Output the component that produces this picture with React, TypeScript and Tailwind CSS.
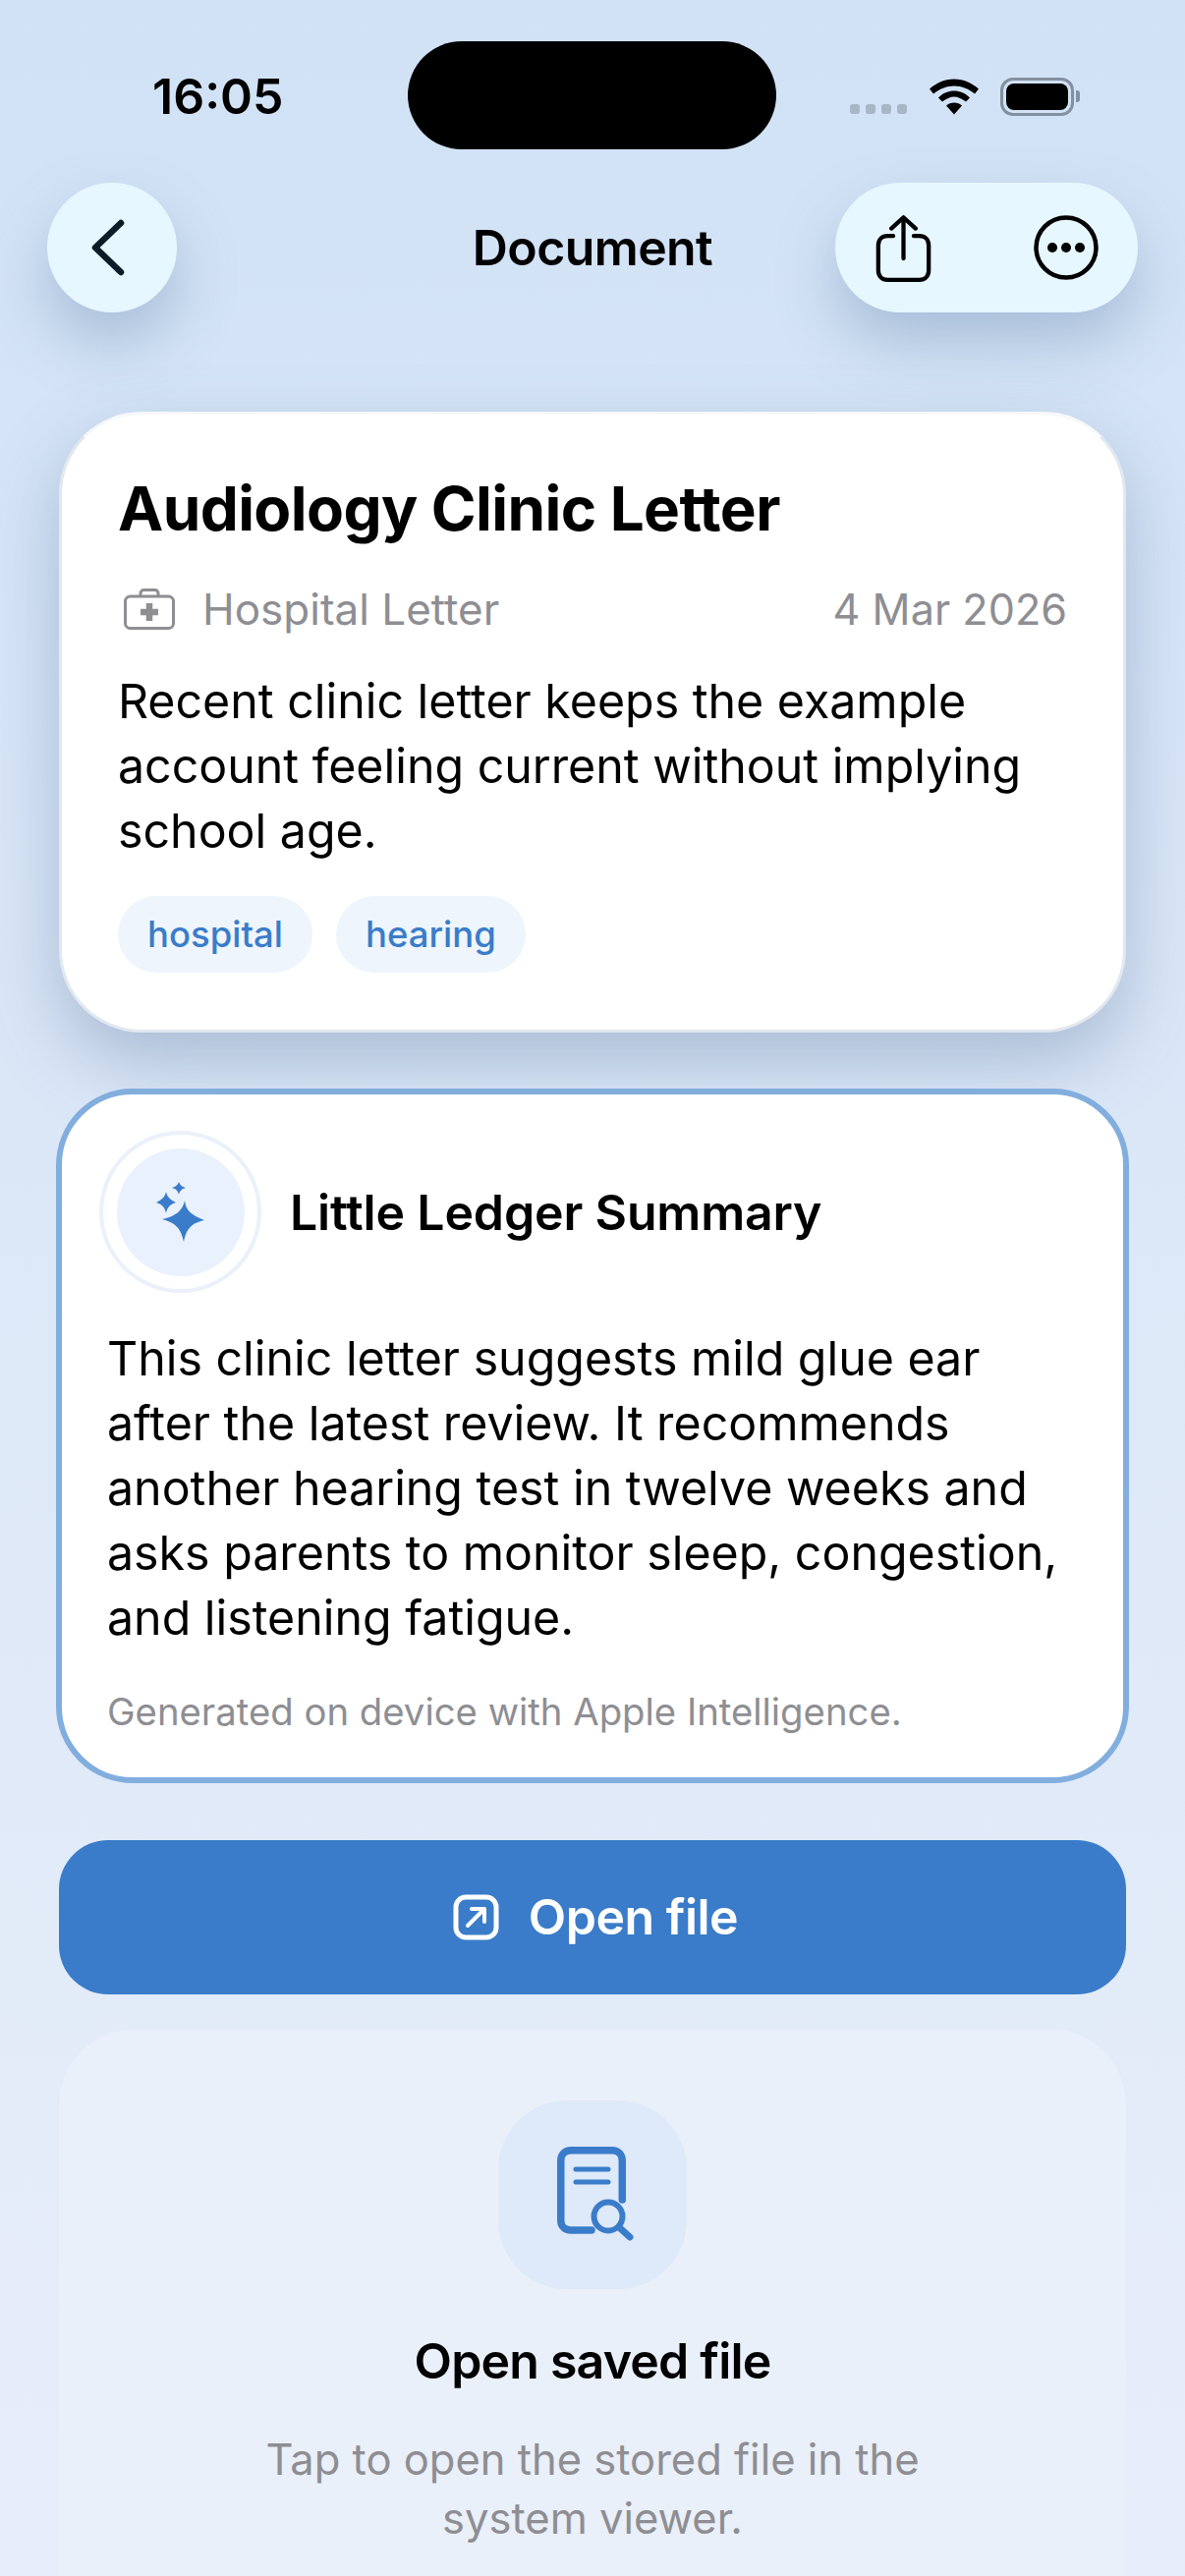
import React from 'react';

const ShareIcon = () => (
  <svg width="57" height="71" viewBox="0 0 60 74" fill="none" stroke="#000" strokeWidth="4.5" strokeLinecap="round" strokeLinejoin="round" className="mt-[3px]">
    <path d="M19 23H13C7 23 3 27 3 33V60C3 66 7 70 13 70H47C53 70 57 66 57 60V33C57 27 53 23 47 23H41" />
    <path d="M30 47V4M17 15L30 3L43 15" />
  </svg>
);

const MoreIcon = () => (
  <svg width="66" height="66" viewBox="0 0 66 66" fill="none">
    <circle cx="33" cy="33" r="30.5" stroke="#000" strokeWidth="4.5" />
    <circle cx="19" cy="33" r="5" fill="#000" />
    <circle cx="33" cy="33" r="5" fill="#000" />
    <circle cx="47" cy="33" r="5" fill="#000" />
  </svg>
);

const MedicalBag = () => (
  <svg width="52" height="42" viewBox="0 0 52 42" fill="none">
    <rect x="1.5" y="8" width="49" height="32.5" rx="5" stroke="#8e8e93" strokeWidth="3" />
    <path d="M17 8V5C17 3 18.5 1.5 20.5 1.5H31.5C33.5 1.5 35 3 35 5V8" stroke="#8e8e93" strokeWidth="3" />
    <path d="M26 15V33M17 24H35" stroke="#8e8e93" strokeWidth="6.5" />
  </svg>
);

const Sparkles = () => (
  <svg width="50" height="62" viewBox="0 0 50 62" fill="#3a7cc9">
    <path d="M29 19C30 29 36 34 49 39C36 42 31 47 28 61C25 47 20 42 6 38C20 35 27 29 29 19Z" />
    <path d="M10 10C11 15 14 18 20 21C14 23 11 26 10 32C9 26 6 23 0 21C6 18 9 15 10 10Z" />
    <path d="M23 0C24 3 26 5 30 6C26 7 24 9 23 13C22 9 20 7 16 6C20 5 22 3 23 0Z" />
  </svg>
);

const OpenIcon = () => (
  <svg width="47" height="47" viewBox="0 0 47 47" fill="none" stroke="#fff" strokeLinecap="round" strokeLinejoin="round">
    <rect x="3" y="3" width="41" height="41" rx="10" strokeWidth="5" />
    <path d="M15 32L31 16M19 15H32V28" strokeWidth="4" />
  </svg>
);

const DocSearch = () => (
  <svg width="78" height="96" viewBox="0 0 78 96" fill="none" stroke="#3a7cc9" strokeLinecap="round" className="ml-[6px] mb-[2px]">
    <path d="M35 85H14C8 85 3.75 81 3.75 75V14C3.75 8 8 3.75 14 3.75H56C62 3.75 66.25 8 66.25 14V54" strokeWidth="7.5" />
    <path d="M19 23H52M19 36H52" strokeWidth="5" />
    <circle cx="52" cy="71" r="14.5" strokeWidth="6" />
    <path d="M63 82L74 92" strokeWidth="7" />
  </svg>
);

const StatusBar = () => (
  <div className="flex items-start justify-between h-[186px] pt-[42px]">
    <div className="w-[415px] pl-[155px] pt-[28px] text-[50px] leading-[56px] font-semibold text-black">16:05</div>
    <div className="w-[375px] h-[110px] rounded-[55px] bg-black" />
    <div className="flex-1 flex items-center pl-[75px] pt-[28px] h-[84px]">
      <div className="flex gap-[6px] mt-[26px] mr-[23px]">
        {[0, 1, 2, 3].map((i) => (
          <span key={i} className="w-[10px] h-[10px] rounded-[3px] bg-[#a9b6c6]" />
        ))}
      </div>
      <svg width="50" height="37" viewBox="0 0 50 36" fill="#000" className="mr-[22px]">
        <path d="M25 0C35 0 43 4 50 10L46 15C40 10 33 7 25 7C17 7 10 10 4 15L0 10C7 4 15 0 25 0Z" />
        <path d="M25 12C31 12 36 14 41 19L37 23C33 20 29 18 25 18C21 18 17 20 13 23L9 19C14 14 19 12 25 12Z" />
        <path d="M25 24C28 24 31 25 33 27L25 36L17 27C19 25 22 24 25 24Z" />
      </svg>
      <div className="w-[75px] h-[39px] rounded-[13px] border-[3px] border-[#83909f] p-[3px]">
        <div className="w-full h-full rounded-[8px] bg-black" />
      </div>
      <div className="w-[4px] h-[12px] rounded-r-[3px] bg-[#83909f] ml-[2px]" />
    </div>
  </div>
);

const Pill = ({ children }: { children: React.ReactNode }) => (
  <div className="h-[78px] px-[30px] rounded-full bg-[#eef5fd] flex items-center text-[36.5px] font-medium text-[#3a7cc9]">{children}</div>
);

export default function App() {
  return (
    <div className="w-[1206px] h-[2622px] overflow-hidden bg-gradient-to-b from-[#d1e2f6] to-[#e8eef9] font-['Inter',sans-serif] text-black">
      <StatusBar />

      <div className="flex items-center justify-between h-[132px] pl-[48px] pr-[48px]">
        <button className="w-[132px] h-[132px] rounded-full bg-[#e6f7ff] shadow-[0_30px_60px_rgba(90,120,160,0.35)] flex items-center justify-center">
          <svg width="34" height="58" viewBox="0 0 34 58" fill="none" stroke="#0c1c26" strokeWidth="6.5" strokeLinecap="round" strokeLinejoin="round" className="mr-[8px]">
            <path d="M30 4L4 29L30 54" />
          </svg>
        </button>
        <div className="flex-1 pl-[176px] text-center text-[50px] font-semibold tracking-[-0.6px]">Document</div>
        <div className="w-[308px] h-[132px] rounded-full bg-[#e6f7ff] shadow-[0_30px_60px_rgba(90,120,160,0.35)] flex items-center justify-between pl-[41px] pr-[40px]">
          <ShareIcon />
          <MoreIcon />
        </div>
      </div>

      <div className="px-[60px] pt-[101px] flex flex-col">
        <div className="h-[632px] rounded-[84px] bg-white border-[3px] border-[#e2e8f0] border-t-[#f6f8fb] shadow-[0_30px_70px_rgba(80,110,150,0.35)] px-[57px] pt-[58px]">
          <h1 className="text-[62px] leading-[76px] font-bold tracking-[-0.6px]">Audiology Clinic Letter</h1>
          <div className="flex items-center justify-between mt-[39px] h-[50px] text-[44px] text-[#8e8e93]">
            <div className="flex items-center gap-[28px] pl-[6px]">
              <MedicalBag />
              <span>Hospital Letter</span>
            </div>
            <span className="text-[43.2px]">4 Mar 2026</span>
          </div>
          <p className="mt-[36px] text-[48.3px] leading-[66px] w-[1000px]">
            Recent clinic letter keeps the example account feeling current without implying school age.
          </p>
          <div className="flex gap-[24px] mt-[33px]">
            <Pill>hospital</Pill>
            <Pill>hearing</Pill>
          </div>
        </div>

        <div className="-mx-[3px] mt-[57px] h-[707px] rounded-[78px] bg-white border-[6px] border-[#82aede] px-[46px] pt-[37px]">
          <div className="flex items-center gap-[30px]">
            <div className="w-[165px] h-[165px] rounded-full border-[4px] border-[#eaf1fb] flex items-center justify-center -ml-[8px]">
              <div className="w-[130px] h-[130px] rounded-full bg-[#e9f1fc] flex items-center justify-center">
                <Sparkles />
              </div>
            </div>
            <div className="text-[50px] font-semibold tracking-[-0.16px] mt-[2px] -ml-[1px]">Little Ledger Summary</div>
          </div>
          <p className="mt-[34px] text-[48.3px] leading-[66px]">
            This clinic letter suggests mild glue ear after the latest review. It recommends another hearing test in twelve weeks and asks parents to monitor sleep, congestion, and listening fatigue.
          </p>
          <div className="mt-[34px] text-[38.3px] text-[#8e8e93]">Generated on device with Apple Intelligence.</div>
        </div>

        <button className="mt-[58px] h-[157px] rounded-[50px] bg-[#3a7cc9] flex items-center justify-center gap-[30px] pl-[6px] text-white text-[50px] font-semibold tracking-[-0.5px]">
          <OpenIcon />
          <span>Open file</span>
        </button>

        <div className="mt-[36px] h-[700px] rounded-[76px] bg-[#eaf0f9] flex flex-col items-center pt-[72px]">
          <div className="w-[192px] h-[192px] rounded-[70px] bg-[#dee9f9] flex items-center justify-center">
            <DocSearch />
          </div>
          <div className="mt-[36px] text-[50px] font-semibold tracking-[-0.8px]">Open saved file</div>
          <p className="mt-[32px] w-[720px] text-center text-[43.5px] leading-[60px] text-[#8e8e93]">
            Tap to open the stored file in the system viewer.
          </p>
        </div>
      </div>
    </div>
  );
}
